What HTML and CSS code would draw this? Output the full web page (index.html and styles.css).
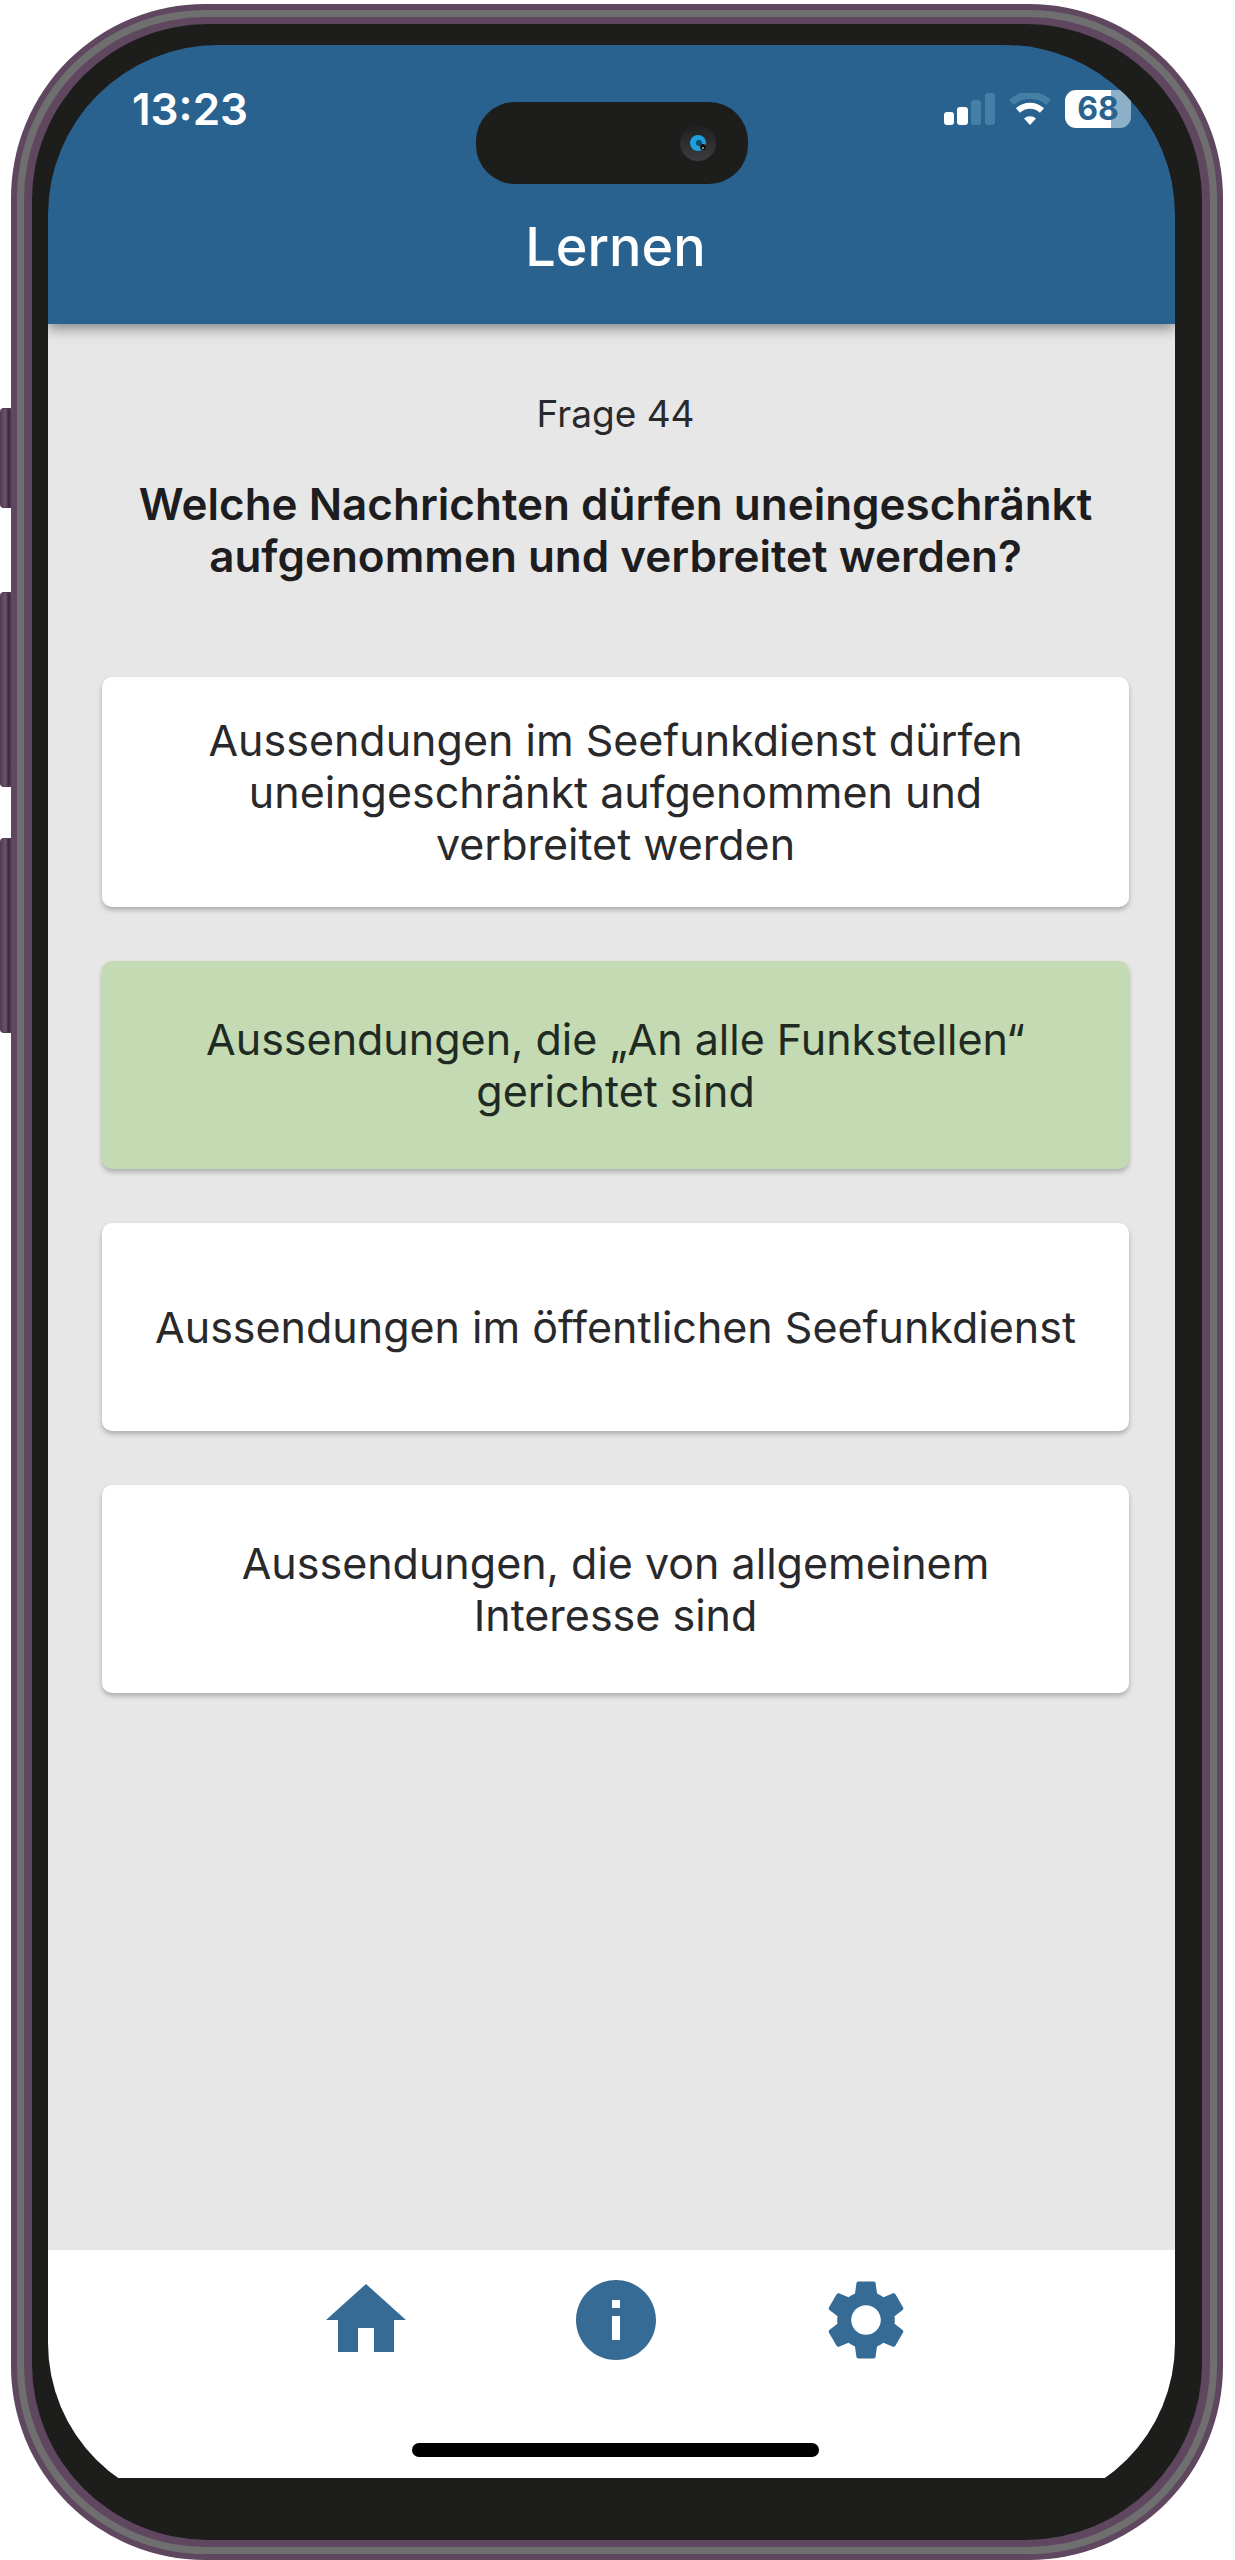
FILE: index.html
```html
<!DOCTYPE html>
<html lang="de">
<head>
<meta charset="utf-8">
<meta name="viewport" content="width=device-width, initial-scale=1">
<title>Lernen – Frage 44</title>
<link rel="stylesheet" href="styles.css">
</head>
<body>
<div class="stage">
  <div class="side-rail" aria-hidden="true">
    <span class="side-key side-key-short"></span>
    <span class="side-key side-key-volume"></span>
    <span class="side-key side-key-volume"></span>
  </div>
  <div class="frame">
    <div class="frame-groove">
      <div class="frame-inner">
        <div class="bezel">
          <div class="screen">
            <header class="app-header">
              <div class="status-bar">
                <span class="clock">13:23</span>
                <div class="status-icons">
                  <svg class="signal" viewBox="0 0 51 32" aria-hidden="true">
                    <rect x="0" y="19" width="10" height="13" rx="3" fill="#fff"/>
                    <rect x="13" y="14" width="11" height="18" rx="3" fill="#fff"/>
                    <rect x="27" y="7" width="10" height="25" rx="3" fill="#4480a6"/>
                    <rect x="41" y="0" width="10" height="32" rx="3" fill="#4480a6"/>
                  </svg>
                  <svg class="wifi" viewBox="0 0 42 32" aria-hidden="true">
                    <path d="M2.500 9.500a27 27 0 0 1 37 0" fill="none" stroke="#4480a6" stroke-width="7"/>
                    <path d="M9 17.500a17.500 17.500 0 0 1 24 0" fill="none" stroke="#fff" stroke-width="6"/>
                    <path d="M21 32l-6-6.500a9 9 0 0 1 12 0z" fill="#fff"/>
                  </svg>
                  <span class="battery">68</span>
                </div>
              </div>
              <h1 class="title">Lernen</h1>
              <svg class="island" viewBox="0 0 272 82" aria-hidden="true">
                <defs>
                  <linearGradient id="lens" x1="0" y1="0" x2="0" y2="1">
                    <stop offset="0" stop-color="#1f1f1f"/>
                    <stop offset="1" stop-color="#3c3d40"/>
                  </linearGradient>
                </defs>
                <rect width="272" height="82" rx="39" fill="#1d1d1b"/>
                <circle cx="222" cy="41" r="18" fill="url(#lens)"/>
                <circle cx="222" cy="41" r="8" fill="#1f9fdc"/>
                <circle cx="223" cy="41" r="3" fill="#0d4a70"/>
                <circle cx="227" cy="45" r="3" fill="#111"/>
                <circle cx="227" cy="46" r="1" fill="#a8a890"/>
              </svg>
            </header>
            <main class="quiz">
              <p class="counter">Frage 44</p>
              <h2 class="question">Welche Nachrichten dürfen uneingeschränkt aufgenommen und verbreitet werden?</h2>
              <div class="answers">
                <button class="answer" type="button">Aussendungen im Seefunkdienst dürfen uneingeschränkt aufgenommen und verbreitet werden</button>
                <button class="answer answer-correct" type="button">Aussendungen, die „An alle Funkstellen“ gerichtet sind</button>
                <button class="answer" type="button">Aussendungen im öffentlichen Seefunkdienst</button>
                <button class="answer" type="button">Aussendungen, die von allgemeinem Interesse sind</button>
              </div>
            </main>
            <footer class="bottom">
              <nav class="tabs">
                <a class="tab" href="#home" aria-label="Startseite">
                  <svg viewBox="0 0 24 24"><path d="M10 20v-6h4v6h5v-8h3L12 3 2 12h3v8z"/></svg>
                </a>
                <a class="tab" href="#info" aria-label="Info">
                  <svg viewBox="0 0 24 24"><path d="M12 2C6.480 2 2 6.480 2 12s4.480 10 10 10 10-4.480 10-10S17.520 2 12 2zm1 15h-2v-6h2v6zm0-8h-2V7h2v2z"/></svg>
                </a>
                <a class="tab" href="#settings" aria-label="Einstellungen">
                  <svg viewBox="0 0 24 24"><path d="M19.140 12.940c.04-.3.06-.61.06-.94 0-.32-.02-.64-.07-.94l2.030-1.580c.18-.14.23-.41.12-.61l-1.920-3.320c-.12-.22-.37-.29-.59-.22l-2.390.96c-.5-.38-1.030-.7-1.620-.94l-.36-2.540c-.04-.24-.24-.41-.48-.41h-3.840c-.24 0-.43.17-.47.41l-.36 2.540c-.59.24-1.130.57-1.620.94l-2.390-.96c-.22-.08-.47 0-.59.22L2.740 8.870c-.12.21-.08.47.12.61l2.030 1.580c-.05.3-.09.63-.09.94s.02.64.07.94l-2.030 1.580c-.18.14-.23.41-.12.61l1.920 3.320c.12.22.37.29.59.22l2.390-.96c.5.38 1.030.7 1.620.94l.36 2.540c.05.24.24.41.48.41h3.840c.24 0 .44-.17.47-.41l.36-2.540c.59-.24 1.130-.56 1.620-.94l2.390.96c.22.08.47 0 .59-.22l1.920-3.320c.12-.22.07-.47-.12-.61l-2.010-1.580zM12 15.700c-2.040 0-3.700-1.660-3.700-3.700s1.660-3.700 3.700-3.700 3.700 1.660 3.700 3.700-1.660 3.700-3.700 3.700z"/></svg>
                </a>
              </nav>
              <div class="home-indicator"></div>
            </footer>
            <div class="chin"></div>
          </div>
        </div>
      </div>
    </div>
  </div>
</div>
</body>
</html>
```
FILE: styles.css
```css
:root {
  --purple: #5f475f;
  --groove: #6f6f6f;
  --black: #1d1d1b;
  --header: #2a628f;
  --icon: #356b95;
  --canvas: #e7e7e7;
}

* {
  box-sizing: border-box;
}

body {
  margin: 0;
  background: #fff;
  color: #29292b;
  font-family: Inter, "Liberation Sans", sans-serif;
  font-size: 43px;
  line-height: 52px;
}

.stage {
  display: flex;
  min-height: 100vh;
  padding: 4px 12px 0 0;
}

/* Hardware keys on the left edge */
.side-rail {
  display: flex;
  flex-direction: column;
  flex: none;
  width: 11px;
  padding-top: 404px;
}

.side-key {
  height: 195px;
  margin-bottom: 51px;
  border: 1px solid #4f3a50;
  border-right: 0;
  border-radius: 4px 0 0 4px;
  background: linear-gradient(90deg, #54405a, #71506d 45%, #3c2740 75%, #4f3a50);
}

.side-key-short {
  height: 100px;
  margin-bottom: 84px;
}

/* Metal frame: purple, grey groove, purple, black bezel */
.frame,
.frame-groove,
.frame-inner,
.bezel,
.screen {
  display: flex;
  flex-direction: column;
  flex: 1;
  min-width: 0;
}

.frame {
  padding: 6px;
  border-radius: 194px;
  background: var(--purple);
}

.frame-groove {
  padding: 7px;
  border-radius: 188px;
  background: var(--groove);
}

.frame-inner {
  padding: 7px 8px;
  border-radius: 182px;
  background: var(--purple);
}

.bezel {
  padding: 21px 27px 32px 16px;
  border-radius: 176px;
  background: var(--black);
}

.screen {
  overflow: hidden;
  border-radius: 170px 170px 165px 165px;
  background: var(--black);
}

.app-header {
  position: relative;
  z-index: 1;
  padding: 38px 44px 45px 84px;
  background: var(--header);
  box-shadow: 0 5px 12px rgba(0, 0, 0, 0.4);
  color: #fff;
}

.status-bar {
  display: flex;
  justify-content: space-between;
  align-items: center;
}

.clock {
  font-size: 44px;
  font-weight: 600;
}

.status-icons {
  display: flex;
  align-items: center;
  gap: 14px;
}

.signal {
  width: 51px;
  height: 32px;
}

.wifi {
  width: 42px;
  height: 32px;
}

.battery {
  width: 66px;
  border-radius: 11px;
  background: linear-gradient(90deg, #fff 69%, #8cb0c8 69%);
  color: var(--header);
  font-size: 32px;
  font-weight: 700;
  line-height: 38px;
  text-align: center;
}

.title {
  margin: 80px 0 0;
  padding-right: 32px;
  font-size: 54px;
  font-weight: 500;
  line-height: 64px;
  text-align: center;
}

.island {
  position: absolute;
  top: 57px;
  left: 50%;
  width: 272px;
  height: 82px;
  transform: translateX(-50%);
}

.quiz {
  flex: 1;
  padding: 68px 46px 54px 54px;
  background: var(--canvas);
  text-align: center;
}

.counter {
  margin: 0 0 42px;
  font-size: 37px;
  line-height: 44px;
}

.question {
  margin: 0 0 95px;
  color: #1d1d1f;
  font-size: 44px;
  font-weight: 600;
  line-height: 52px;
}

.answers {
  display: flex;
  flex-direction: column;
  gap: 54px;
}

.answer {
  min-height: 208px;
  padding: 37px 50px;
  border: 0;
  border-radius: 10px;
  background: #fff;
  box-shadow: 0 3px 5px rgba(0, 0, 0, 0.25);
  color: inherit;
  font: inherit;
}

.answer-correct {
  background: #c3dab3;
  color: #1f2b22;
}

.bottom {
  padding: 22px 0 21px 8px;
  background: #fff;
}

.tabs {
  display: flex;
  justify-content: center;
  gap: 154px;
}

.tab {
  width: 96px;
  height: 96px;
  fill: var(--icon);
}

.home-indicator {
  width: 407px;
  height: 14px;
  margin: 75px auto 0;
  border-radius: 7px;
  background: #000;
}

.chin {
  height: 30px;
  background: var(--black);
}
```
